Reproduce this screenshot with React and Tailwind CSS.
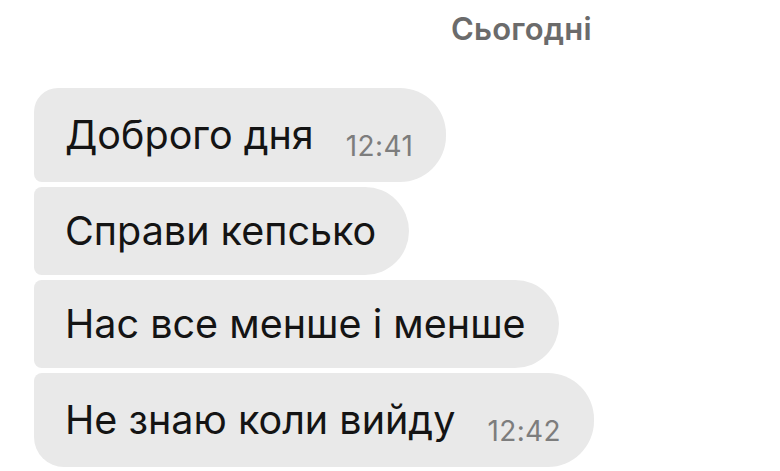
export default function App() {
  const msgs = [
    { text: "Доброго дня", time: "12:41", h: "h-[94px]", corners: "rounded-tl-[24px] rounded-bl-[8px]" },
    { text: "Справи кепсько", h: "h-[88px]", corners: "rounded-tl-[8px] rounded-bl-[8px]" },
    { text: "Нас все менше і менше", h: "h-[88px]", corners: "rounded-tl-[8px] rounded-bl-[8px]" },
    { text: "Не знаю коли вийду", time: "12:42", h: "h-[94px]", corners: "rounded-tl-[8px] rounded-bl-[30px]" },
  ];

  return (
    <div className="w-[780px] h-[471px] bg-white overflow-hidden font-['Inter','Liberation_Sans',sans-serif]">
      <div className="pt-[6px] pl-[451px] h-[88px]">
        <span className="text-[31px] font-semibold text-[#6b6b6b] tracking-[0.2px]">Сьогодні</span>
      </div>
      <div className="flex flex-col items-start gap-[5px] pl-[34px]">
        {msgs.map((m) => (
          <div
            key={m.text}
            className={`flex items-center bg-[#e9e9e9] pl-[31px] pr-[33px] pt-[2px] rounded-r-[46px] ${m.h} ${m.corners}`}
          >
            <span className="text-[39.5px] leading-none text-[#141414]">{m.text}</span>
            {m.time && (
              <span className="ml-[32px] text-[28px] leading-none text-[#7d7d7d] tracking-[0.4px] translate-y-[10px]">{m.time}</span>
            )}
          </div>
        ))}
      </div>
    </div>
  );
}
